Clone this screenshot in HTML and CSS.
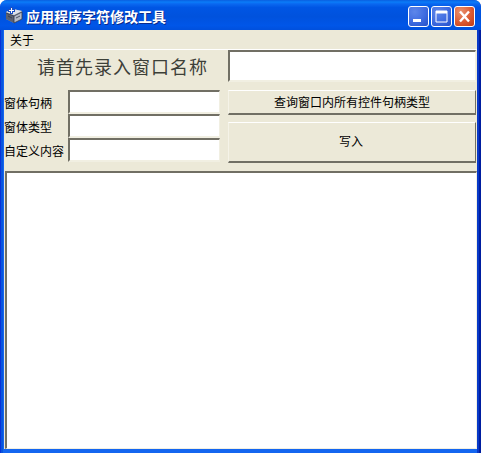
FILE: index.html
```html
<!DOCTYPE html>
<html lang="zh">
<head>
<meta charset="utf-8">
<title>应用程序字符修改工具</title>
<link rel="stylesheet" href="styles.css">
</head>
<body>
<div class="window">
  <div class="titlebar">
    <svg class="app-icon" width="18" height="18" viewBox="0 0 18 18">
      <path d="M1 6 L8 3 L17 5 L17 13 L9 17 L1 13 Z" fill="#8f97a8"/>
      <path d="M1 7 L9 10 L9 17 L1 13 Z" fill="#5a6070"/>
      <path d="M9 10 L17 6 L17 13 L9 17 Z" fill="#b4bac6"/>
      <path d="M1 6 L8 3 L17 5 L9 9 Z" fill="#dfe3ea"/>
      <path d="M9 10 L17 6 L17 13 L9 17 Z M1 7 L9 10 M3 10 L7 12 M11 12 L15 10" fill="none" stroke="#30364a" stroke-width=".8"/>
      <path d="M5 1 H8 V3 H10 V6 H8 V8 H5 V6 H3 V3 H5 Z" fill="#1b4fc4"/>
      <path d="M6 2 H7 V4 H9 V5 H7 V7 H6 V5 H4 V4 H6 Z" fill="#fff"/>
    </svg>
    <span class="title">应用程序字符修改工具</span>
    <div class="controls">
      <div class="ctl ctl-blue">
        <svg width="19" height="19" viewBox="0 0 19 19"><rect x="4" y="12" width="8" height="3" fill="#fff"/></svg>
      </div>
      <div class="ctl ctl-blue">
        <svg width="19" height="19" viewBox="0 0 19 19"><path d="M4 4 H15 V15 H4 Z" fill="none" stroke="#fff"/><rect x="4" y="4" width="11" height="2.5" fill="#fff"/></svg>
      </div>
      <div class="ctl ctl-red">
        <svg width="19" height="19" viewBox="0 0 19 19"><path d="M5 4.5 L14 14.5 M14 4.5 L5 14.5" stroke="#fff" stroke-width="2.4" fill="none"/></svg>
      </div>
    </div>
  </div>
  <div class="client">
    <div class="menu"><span class="menu-item">关于</span></div>
    <div class="top-row">
      <div class="prompt">请首先录入窗口名称</div>
      <input class="field field-top" type="text">
    </div>
    <div class="form">
      <div class="fields">
        <label class="label">窗体句柄</label><input class="field" type="text">
        <label class="label">窗体类型</label><input class="field" type="text">
        <label class="label">自定义内容</label><input class="field" type="text">
      </div>
      <div class="buttons">
        <button class="btn btn-query" type="button">查询窗口内所有控件句柄类型</button>
        <button class="btn btn-write" type="button">写入</button>
      </div>
    </div>
    <textarea class="output"></textarea>
  </div>
</div>
</body>
</html>
```

FILE: styles.css
```css
* { box-sizing: border-box; }
html, body { margin: 0; padding: 0; background: #fff; }
body { font-family: "Noto Sans CJK SC", "Liberation Sans", sans-serif; font-size: 12px; color: #000; }
.window {
  width: 481px; height: 453px; display: flex; flex-direction: column;
  background: linear-gradient(90deg, #0831d9 0, #0831d9 1px, #0855dd 1px, #0855dd 3px, #1466f0 3px, #1466f0 477px, #0838c8 477px, #0838c8 479px, #001ea0 479px);
  border-radius: 7px 7px 0 0; overflow: hidden;
}
.titlebar {
  height: 30px; flex: none; display: flex; align-items: center; padding: 2px 6px 0 5px;
  background: linear-gradient(180deg, #0a5fe0 0, #0a7cf8 7%, #0a68f0 13%, #0056e4 25%, #0052dd 55%, #0056e8 85%, #0050dd 100%);
}
.app-icon { flex: none; margin-top: -2px; }
.title {
  margin-left: 3px; font-size: 14px; line-height: 18px; font-weight: 700; color: #fff;
  text-shadow: 1px 1px 0 #0a2a8c; white-space: nowrap;
}
.controls { margin-left: auto; display: flex; gap: 2px; }
.ctl {
  width: 21px; height: 21px; border: 1px solid #fff; border-radius: 3px; display: flex;
  align-items: center; justify-content: center;
}
.ctl-blue { background: radial-gradient(circle at 30% 25%, #5d86ea 0, #3e6be0 55%, #2450c8 100%); }
.ctl-red { background: radial-gradient(circle at 30% 25%, #e9926f 0, #dc5a32 55%, #bf3a14 100%); }
.client {
  flex: 1; min-height: 0; margin: 0 4px 4px 4px; background: #ece9d8;
  display: flex; flex-direction: column;
}
.menu { height: 20px; flex: none; border-bottom: 1px solid #fff; padding-left: 6px; line-height: 19px; }
.menu-item { font-size: 12px; }
.top-row { height: 33px; flex: none; display: flex; align-items: flex-start; }
.prompt {
  width: 224px; padding: 4px 0 0 33px; font-size: 18px; line-height: 24px;
  letter-spacing: 1px; color: #3d4038; white-space: nowrap;
}
.field {
  display: block; margin: 0; padding: 0; background: #fff; outline: none; border-radius: 0;
  border-style: solid; border-width: 2px 1px 2px 2px;
  border-color: #716f64 #f1efe2 #f1efe2 #716f64;
}
.field-top { width: 248px; height: 32px; }
.form { flex: none; display: flex; height: 73px; margin-top: 7px; }
.fields {
  width: 216px; display: grid; grid-template-columns: 64px 152px;
  grid-template-rows: 24px 24px 24px; row-gap: 0;
}
.fields .field { width: 152px; height: 24px; }
.label { font-size: 12px; line-height: 26px; white-space: nowrap; letter-spacing: 0; }
.buttons { margin-left: 8px; width: 248px; display: flex; flex-direction: column; gap: 7px; }
.btn {
  display: block; width: 248px; margin: 0; padding: 0; background: #ece9d8; color: #000;
  font: inherit; font-size: 12px; border-style: solid; border-radius: 0;
  border-width: 1px 1px 2px 1px; border-color: #fff #716f64 #716f64 #f5f3e8;
}
.btn-query { height: 25px; padding-bottom: 1px; }
.btn-write { height: 41px; padding-bottom: 3px; padding-right: 2px; }
.output {
  display: block; flex: none; width: 472px; height: 278px; margin: 8px 0 0 1px; padding: 0;
  background: #fff; resize: none; outline: none; overflow: hidden; border-radius: 0;
  border-style: solid; border-width: 2px 1px 1px 2px;
  border-color: #716f64 #f1efe2 #f1efe2 #716f64;
}
```
